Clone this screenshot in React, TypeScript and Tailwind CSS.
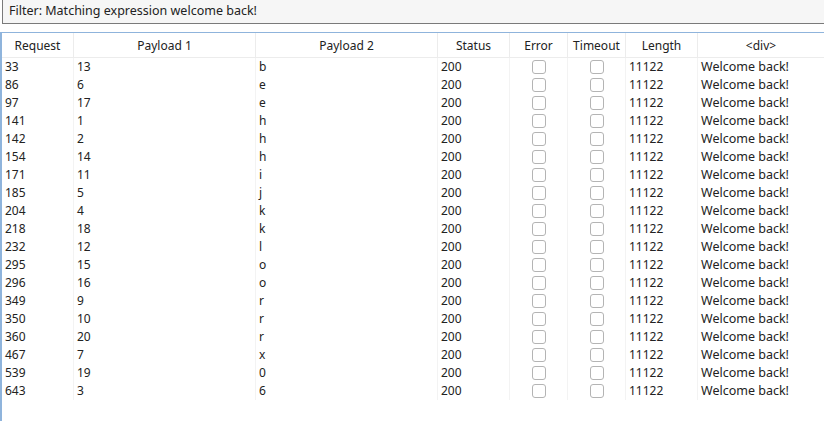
const rows: [number, number, string][] = [
  [33, 13, "b"],
  [86, 6, "e"],
  [97, 17, "e"],
  [141, 1, "h"],
  [142, 2, "h"],
  [154, 14, "h"],
  [171, 11, "i"],
  [185, 5, "j"],
  [204, 4, "k"],
  [218, 18, "k"],
  [232, 12, "l"],
  [295, 15, "o"],
  [296, 16, "o"],
  [349, 9, "r"],
  [350, 10, "r"],
  [360, 20, "r"],
  [467, 7, "x"],
  [539, 19, "0"],
  [643, 3, "6"],
];

const cols = "grid grid-cols-[72px_182px_182px_72px_58px_58px_72px_1fr]";
const headers = ["Request", "Payload 1", "Payload 2", "Status", "Error", "Timeout", "Length", "<div>"];

function Box() {
  return <div className="h-[14px] w-[14px] rounded-[3px] border border-[#b4b4b4] bg-white" />;
}

export default function App() {
  return (
    <div className="h-[421px] w-[824px] overflow-hidden bg-white text-[12px] text-[#222] font-['Noto_Sans',sans-serif]">
      <div className="ml-[2px] flex h-[24px] items-center border-b border-l border-[#7a7a7a] bg-[#f6f6f6] pl-[6px] text-[12.5px]">
        Filter: Matching expression welcome back!
      </div>
      <div className="mt-[8px] h-[389px] border-l-2 border-t border-[#8fb4dc]">
        <div className={`${cols} h-[25px] border-b border-[#ececec]`}>
          {headers.map((h, i) => (
            <div
              key={h}
              className={`flex items-center justify-center pt-[1px] ${i < headers.length - 1 ? "border-r border-[#ececec]" : ""}`}
            >
              {h}
            </div>
          ))}
        </div>
        {rows.map(([req, p1, p2]) => (
          <div key={req} className={`${cols} h-[18px] leading-[18px]`}>
            <div className="border-r border-[#f3f3f3] pl-[3px]">{req}</div>
            <div className="border-r border-[#f3f3f3] pl-[3px]">{p1}</div>
            <div className="border-r border-[#f3f3f3] pl-[3px]">{p2}</div>
            <div className="border-r border-[#f3f3f3] pl-[3px]">200</div>
            <div className="flex items-center justify-center border-r border-[#f3f3f3]">
              <Box />
            </div>
            <div className="flex items-center justify-center border-r border-[#f3f3f3]">
              <Box />
            </div>
            <div className="border-r border-[#f3f3f3] pl-[3px]">11122</div>
            <div className="pl-[3px] text-[12.5px]">Welcome back!</div>
          </div>
        ))}
      </div>
    </div>
  );
}
